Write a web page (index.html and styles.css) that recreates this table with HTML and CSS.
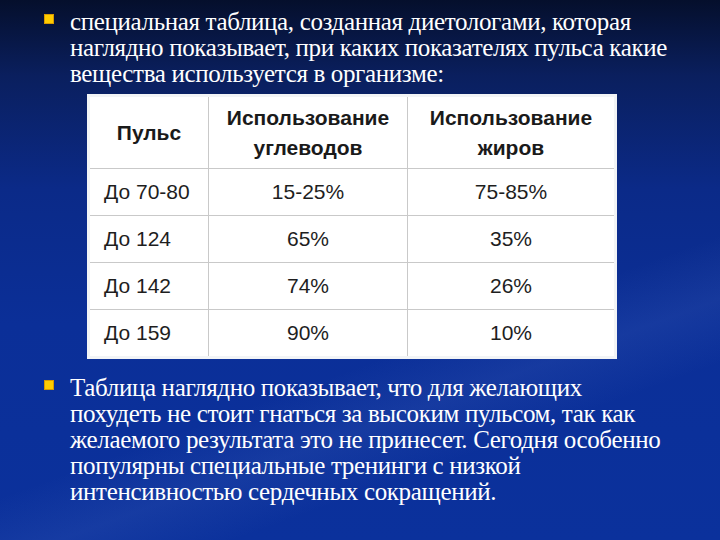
FILE: index.html
```html
<!DOCTYPE html>
<html lang="ru">
<head>
<meta charset="utf-8">
<link rel="stylesheet" href="styles.css">
</head>
<body>
<div class="slide">
  <div class="item first">
    <span class="bullet"></span>
    <p class="text">специальная таблица, созданная диетологами, которая<br>наглядно показывает, при каких показателях пульса какие<br>вещества используется в организме:</p>
  </div>
  <table class="pulse">
    <colgroup><col class="c1"><col class="c2"><col class="c3"></colgroup>
    <thead>
      <tr><th>Пульс</th><th>Использование<br>углеводов</th><th>Использование<br>жиров</th></tr>
    </thead>
    <tbody>
      <tr><td class="left">До 70-80</td><td>15-25%</td><td>75-85%</td></tr>
      <tr><td class="left">До 124</td><td>65%</td><td>35%</td></tr>
      <tr><td class="left">До 142</td><td>74%</td><td>26%</td></tr>
      <tr><td class="left">До 159</td><td>90%</td><td>10%</td></tr>
    </tbody>
  </table>
  <div class="item second">
    <span class="bullet"></span>
    <p class="text">Таблица наглядно показывает, что для желающих<br>похудеть не стоит гнаться за высоким пульсом, так как<br>желаемого результата это не принесет. Сегодня особенно<br>популярны специальные тренинги с низкой<br>интенсивностью сердечных сокращений.</p>
  </div>
</div>
</body>
</html>
```

FILE: styles.css
```css
html, body {
  margin: 0;
  padding: 0;
}
body {
  width: 720px;
  height: 540px;
  overflow: hidden;
  background:
    linear-gradient(160deg, rgba(255,255,255,0) 62%, rgba(120,150,220,0.10) 70%, rgba(255,255,255,0) 78%),
    linear-gradient(180deg, #050f2c 0%, #0a1f5e 14%, #0b2a88 35%, #0b2f98 60%, #0b319c 100%);
}
.slide {
  padding-top: 9px;
  font-family: "Liberation Serif", "Times New Roman", serif;
  color: #ffffff;
}
.item {
  display: flex;
  align-items: flex-start;
  padding-left: 44px;
}
.bullet {
  flex: none;
  width: 8px;
  height: 8px;
  margin-top: 5px;
  background: #ffcc00;
  border: 1px solid #d89a00;
  margin-right: 16px;
}
.text {
  margin: 0;
  font-size: 25px;
  line-height: 26px;
  letter-spacing: -0.35px;
  white-space: nowrap;
}
.pulse {
  margin: 7px 0 0 87px;
  width: 527px;
  border-collapse: collapse;
  table-layout: fixed;
  background: #ffffff;
  border: 3px solid #f2f4f6;
  font-family: "Liberation Sans", Arial, sans-serif;
  color: #1e1e1e;
  font-size: 21px;
}
.c1 { width: 120px; }
.c2 { width: 199px; }
.c3 { width: 208px; }
.pulse th, .pulse td {
  border: 1px solid #c9c9c9;
  text-align: center;
  padding: 0;
}
.pulse th {
  height: 71px;
  font-weight: bold;
  line-height: 30px;
  color: #1a1a1a;
}
.pulse td {
  height: 46px;
}
.pulse td.left {
  text-align: left;
  padding-left: 14px;
}
.second {
  margin-top: 16px;
}
```
